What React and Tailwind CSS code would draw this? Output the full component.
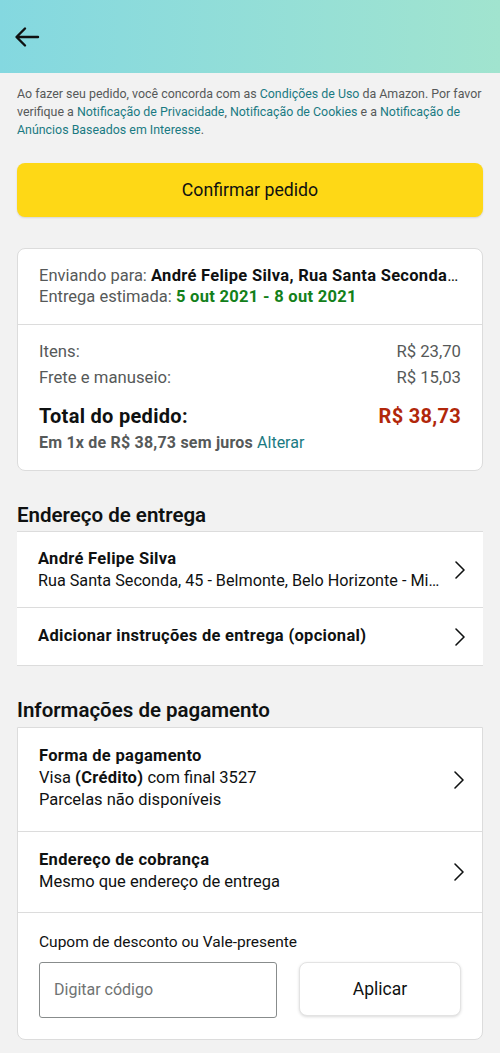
import React from "react";

const Chevron = () => (
  <svg width="12" height="20" viewBox="0 0 12 20" fill="none" className="shrink-0">
    <polyline points="2,2 10,10 2,18" stroke="#0f1111" strokeWidth="1.6" strokeLinecap="round" strokeLinejoin="round" />
  </svg>
);

const B = ({ children, className = "" }) => (
  <span className={"font-bold tracking-[0.3px] " + className}>{children}</span>
);

export default function App() {
  return (
    <div className="min-h-[1053px] bg-[#f2f2f2] text-[#0f1111]" style={{ fontFamily: 'Roboto, "Noto Sans", sans-serif' }}>
      <div className="h-[73px] bg-gradient-to-r from-[#84d8e0] to-[#a1e4cf] flex items-center px-[14px]">
        <svg width="26" height="22" viewBox="0 0 26 22" fill="none">
          <path d="M24 11H3M11 2.5L2.5 11L11 19.5" stroke="#0f1111" strokeWidth="2.4" strokeLinecap="round" strokeLinejoin="round" />
        </svg>
      </div>

      <div className="px-[17px]">
        <p className="pt-[12px] text-[12.4px] leading-[18px] text-[#565959]">
          Ao fazer seu pedido, você concorda com as <span className="text-[#1a7a82]">Condições de Uso</span> da Amazon. Por favor verifique a <span className="text-[#1a7a82]">Notificação de Privacidade</span>, <span className="text-[#1a7a82]">Notificação de Cookies</span> e a <span className="text-[#1a7a82]">Notificação de Anúncios Baseados em Interesse</span>.
        </p>

        <button className="mt-[24px] w-full h-[54px] rounded-[8px] bg-[#fed816] text-[17.7px] text-[#0f1111] shadow-[0_1px_2px_rgba(0,0,0,0.12)]">
          Confirmar pedido
        </button>

        <div className="mt-[31px] bg-white rounded-[8px] border border-[#dcdcdc]">
          <div className="px-[21px] pt-[16px] pb-[17px] text-[16.5px] leading-[21px]">
            <div className="truncate">
              <span className="text-[#565959]">Enviando para: </span>
              <B>André Felipe Silva, Rua Santa Seconda, 45 - Belmonte</B>
            </div>
            <div>
              <span className="text-[#565959]">Entrega estimada: </span>
              <B className="text-[#13801a]">5 out 2021 - 8 out 2021</B>
            </div>
          </div>
          <div className="border-t border-[#dcdcdc] px-[21px] pt-[14px] pb-[16px]">
            <div className="flex justify-between text-[16.7px] leading-[26px] text-[#565959]">
              <span>Itens:</span>
              <span>R$ 23,70</span>
            </div>
            <div className="flex justify-between text-[16.7px] leading-[26px] text-[#565959]">
              <span>Frete e manuseio:</span>
              <span>R$ 15,03</span>
            </div>
            <div className="mt-[12px] flex justify-between text-[20px] leading-[26px] font-bold tracking-[0.3px]">
              <span>Total do pedido:</span>
              <span className="text-[#b1270a]">R$ 38,73</span>
            </div>
            <div className="mt-[3px] text-[16px] leading-[22px] font-bold tracking-[0.2px] text-[#565959]">
              Em 1x de R$ 38,73 sem juros <span className="font-normal tracking-normal text-[#1a7a82]">Alterar</span>
            </div>
          </div>
        </div>

        <h2 className="mt-[31px] text-[20.5px] leading-[26px] font-semibold">Endereço de entrega</h2>
        <div className="mt-[3px] bg-white border-t border-b border-[#dcdcdc]">
          <div className="flex items-center gap-3 pl-[21px] pr-[17px] h-[75px]">
            <div className="min-w-0 flex-1 text-[16.5px] leading-[22px]">
              <div><B>André Felipe Silva</B></div>
              <div className="truncate text-[16.2px]">Rua Santa Seconda, 45 - Belmonte, Belo Horizonte - Minas Gerais</div>
            </div>
            <Chevron />
          </div>
          <div className="border-t border-[#dcdcdc] flex items-center justify-between pl-[21px] pr-[17px] h-[58px]">
            <div className="text-[16.5px]"><B>Adicionar instruções de entrega (opcional)</B></div>
            <Chevron />
          </div>
        </div>

        <h2 className="mt-[31px] text-[20.5px] leading-[26px] font-semibold">Informações de pagamento</h2>
        <div className="mt-[4px] bg-white border border-[#dcdcdc] rounded-b-[8px]">
          <div className="flex items-center justify-between pl-[21px] pr-[17px] h-[103px]">
            <div className="text-[16.5px] leading-[22px] -mt-[4px]">
              <div><B>Forma de pagamento</B></div>
              <div>Visa <B>(Crédito)</B> com final 3527</div>
              <div>Parcelas não disponíveis</div>
            </div>
            <Chevron />
          </div>
          <div className="border-t border-[#dcdcdc] flex items-center justify-between pl-[21px] pr-[17px] h-[81px]">
            <div className="text-[16.5px] leading-[22px] -mt-[2px]">
              <div><B>Endereço de cobrança</B></div>
              <div>Mesmo que endereço de entrega</div>
            </div>
            <Chevron />
          </div>
          <div className="border-t border-[#dcdcdc] px-[21px] pt-[18px] pb-[21px]">
            <div className="text-[15.5px] leading-[22px]">Cupom de desconto ou Vale-presente</div>
            <div className="mt-[9px] flex gap-[22px]">
              <div className="w-[238px] h-[56px] border border-[#888c8c] rounded-[3px] flex items-center px-[14px] text-[16px] text-[#6f7373]">
                Digitar código
              </div>
              <button className="flex-1 h-[54px] rounded-[8px] border border-[#e3e3e3] bg-white text-[17.5px] shadow-[0_1px_3px_rgba(0,0,0,0.15)]">
                Aplicar
              </button>
            </div>
          </div>
        </div>
      </div>
    </div>
  );
}
